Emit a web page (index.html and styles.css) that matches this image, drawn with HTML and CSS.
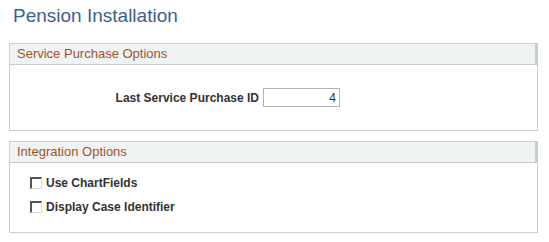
FILE: index.html
```html
<!DOCTYPE html>
<html lang="en">

<head>
    <meta charset="UTF-8" />
    <title>Pension Installation</title>
    <link rel="stylesheet" href="styles.css">
</head>

<body>
    <h1 class="page-title">Pension Installation</h1>

    <section class="group">
        <div class="group-label">Service Purchase Options</div>
        <div class="group-body purchase-body">
            <div class="field-row">
                <label class="field-label" for="last-id">Last Service Purchase ID</label>
                <input class="field-input" type="text" id="last-id" value="4" />
            </div>
        </div>
    </section>

    <section class="group">
        <div class="group-label">Integration Options</div>
        <div class="group-body options-body">
            <label class="check-row"><span class="check-box"></span>Use ChartFields</label>
            <label class="check-row"><span class="check-box"></span>Display Case Identifier</label>
        </div>
    </section>
</body>

</html>
```

FILE: styles.css
```css
/* Base */
* {
    margin: 0;
    padding: 0;
    box-sizing: border-box;
}

body {
    background: #fff;
    color: #333;
    font-family: 'Liberation Sans', Arial, sans-serif;
    font-size: 12px;
}

/* Title */
.page-title {
    font-size: 19px;
    font-weight: 400;
    color: #3f5f8c;
    padding: 5px 0 0 13px;
    height: 43px;
}

/* Group boxes */
.group {
    margin: 0 11px 10px 9px;
    border: 1px solid #c9ccd1;
}

.group-label {
    height: 21px;
    line-height: 20px;
    padding-left: 7px;
    font-size: 13px;
    color: #a5522b;
    background-color: #eff3f4;
    border-bottom: 1px solid #c6cbd1;
    border-right: 2px solid #c6cbd1;
}

.purchase-body {
    height: 65px;
    padding-top: 23px;
}

.field-row {
    display: flex;
    align-items: center;
    gap: 4px;
}

.field-label {
    width: 249px;
    text-align: right;
    font-weight: 700;
}

.field-input {
    width: 77px;
    height: 19px;
    border: 1px solid #b3b3b3;
    padding: 0 3px;
    text-align: right;
    font-family: inherit;
    font-size: 12px;
    color: #333;
}

.options-body {
    height: 69px;
    padding: 13px 0 0 20px;
    display: flex;
    flex-direction: column;
    gap: 10px;
}

.check-row {
    display: flex;
    align-items: center;
    gap: 4px;
    font-weight: 700;
    height: 14px;
}

.check-box {
    width: 12px;
    height: 12px;
    border-top: 2px solid #555;
    border-left: 2px solid #555;
    border-right: 1px solid #d8d8d8;
    border-bottom: 1px solid #d8d8d8;
    background: #fff;
}
```
